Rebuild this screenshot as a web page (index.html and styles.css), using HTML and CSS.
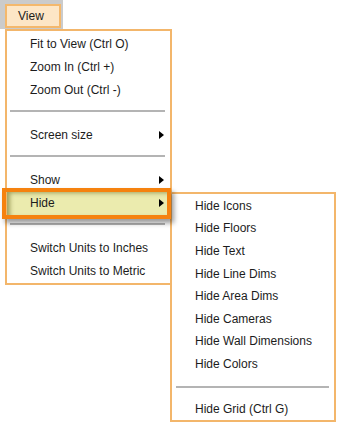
FILE: index.html
```html
<!DOCTYPE html>
<html lang="en">
	<head>
		<meta charset="UTF-8" />
		<meta name="viewport" content="width=device-width, initial-scale=1.0" />
		<title>View Menu</title>

		<link rel="stylesheet" href="styles.css">
	</head>

	<body>
		<div class="menubar">
			<div class="menubar-btn">View</div>
		</div>
		<!-- /.menubar -->

		<div class="menu main-menu">
			<div class="item">Fit to View (Ctrl O)</div>
			<div class="item">Zoom In (Ctrl +)</div>
			<div class="item">Zoom Out (Ctrl -)</div>
			<div class="sep"></div>
			<div class="item">Screen size<span class="arrow"></span></div>
			<div class="sep"></div>
			<div class="item">Show<span class="arrow"></span></div>
			<div class="item active">Hide<span class="arrow"></span>
				<div class="menu sub-menu">
					<div class="item">Hide Icons</div>
					<div class="item">Hide Floors</div>
					<div class="item">Hide Text</div>
					<div class="item">Hide Line Dims</div>
					<div class="item">Hide Area Dims</div>
					<div class="item">Hide Cameras</div>
					<div class="item">Hide Wall Dimensions</div>
					<div class="item">Hide Colors</div>
					<div class="sep"></div>
					<div class="item">Hide Grid (Ctrl G)</div>
				</div>
			</div>
			<div class="sep"></div>
			<div class="item">Switch Units to Inches</div>
			<div class="item">Switch Units to Metric</div>
		</div>
		<!-- /.main-menu -->
	</body>
</html>
```

FILE: styles.css
```css
html {
	height: 100%;
}

body {
	min-height: 100%;
	margin: 0;
	background: #fff;
	color: #1c1c1c;
	font: 12px "Liberation Sans", Arial, sans-serif;
}

.menubar {
	box-sizing: border-box;
	width: 63px;
	height: 29px;
	padding: 4px 0 0 5px;
	background: #cbcbcb;
}

.menubar-btn {
	box-sizing: border-box;
	width: 56px;
	height: 24px;
	padding-left: 11px;
	border: 2px solid #f4b86c;
	background: #fde6c6;
	line-height: 20px;
}

.menu {
	box-sizing: border-box;
	border: 2px solid #f3b66b;
	background: #fff;
}

.main-menu {
	width: 167px;
	margin-left: 5px;
	padding-top: 2px;
}

.item {
	position: relative;
	height: 22.75px;
	padding-left: 23px;
	line-height: 22.75px;
	white-space: nowrap;
}

.sep {
	box-sizing: border-box;
	height: 22.5px;
	padding: 8.5px 5px 0 3px;
}

.sep::before {
	content: "";
	display: block;
	height: 2px;
	background: #b4b4b4;
}

.arrow {
	position: absolute;
	right: 6px;
	top: 50%;
	margin-top: -4px;
	border-left: 5px solid #000;
	border-top: 4px solid transparent;
	border-bottom: 4px solid transparent;
}

/* highlighted item with the orange callout frame */
.item.active {
	background: #ebebae;
	box-shadow: inset 4px 2px 4px -1px rgba(90, 90, 20, 0.5);
}

.item.active::after {
	content: "";
	position: absolute;
	left: -5px;
	top: -4px;
	right: -1px;
	bottom: -4px;
	z-index: 2;
	border: 4px solid #f5820f;
	box-shadow: 3px 4px 5px rgba(0, 0, 0, 0.4);
}

.sub-menu {
	position: absolute;
	left: 163px;
	top: 0;
	z-index: 1;
	width: 166px;
	padding-top: 1px;
}

.sub-menu .item {
	height: 22.6px;
	line-height: 22.6px;
}

.sub-menu .sep {
	height: 22px;
	padding: 10px 5px 0 4px;
}
```
